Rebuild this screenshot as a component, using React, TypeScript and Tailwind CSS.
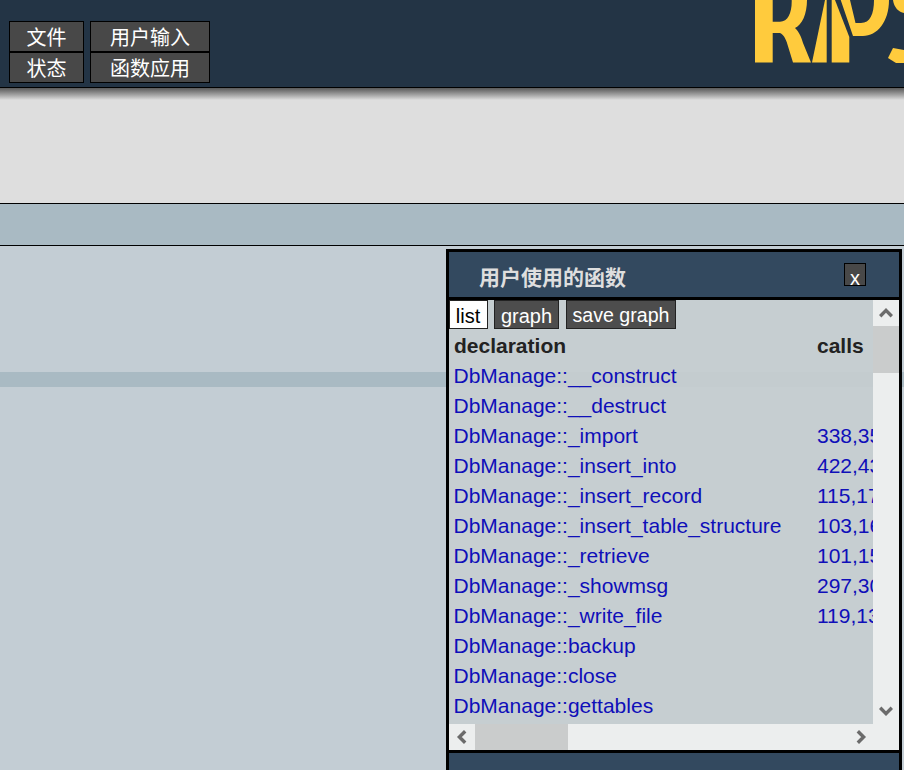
const functions: [string, string][] = [
  ["DbManage::__construct", ""],
  ["DbManage::__destruct", ""],
  ["DbManage::_import", "338,351"],
  ["DbManage::_insert_into", "422,433"],
  ["DbManage::_insert_record", "115,172"],
  ["DbManage::_insert_table_structure", "103,161"],
  ["DbManage::_retrieve", "101,151"],
  ["DbManage::_showmsg", "297,301"],
  ["DbManage::_write_file", "119,131"],
  ["DbManage::backup", ""],
  ["DbManage::close", ""],
  ["DbManage::gettables", ""],
];

const Chevron = ({ d }: { d: string }) => (
  <svg width="14" height="14" viewBox="0 0 14 14" fill="none" stroke="#6b6b6b" strokeWidth="3.4">
    <path d={d} />
  </svg>
);

const MenuButton = ({ label, className }: { label: string; className: string }) => (
  <div className={`flex h-[31px] items-center justify-center border border-black bg-[#484848] pt-[2px] text-[20px] leading-none text-white ${className}`}>
    {label}
  </div>
);

export default function App() {
  return (
    <div className="relative h-[770px] overflow-hidden bg-[#c3cdd4] font-['Liberation_Sans','Noto_Sans_CJK_SC',sans-serif]">
      {/* Header */}
      <div className="relative h-[88px] overflow-hidden border-b border-black bg-[#233445]">
        <div className="grid w-[211px] grid-cols-[75px_120px] gap-x-[6px] pl-[9px] pt-[21px]">
          <MenuButton label="文件" className="w-[75px]" />
          <MenuButton label="用户输入" className="w-[120px]" />
          <MenuButton label="状态" className="w-[75px]" />
          <MenuButton label="函数应用" className="w-[120px]" />
        </div>
        <svg className="absolute left-[755px] top-0" width="149" height="63" viewBox="0 0 149 63" fill="#ffcb3d">
          <path fillRule="evenodd" d="M0 0V62.5H17.7V33H25C29 35 30 38 31.7 42L38 62.5H56L48 43C46 36 44 32 40 28C47 25 52 14 52 0H36.7C37 13 33 21.7 25 21.7H17.7V0Z" />
          <path d="M57 62.5L70 0H71.7V62.5Z" />
          <path d="M76.7 0H80L94.3 37V62.5H76.7Z" />
          <path d="M85.7 0L98 36H108C122 36 134 22 134 0H119C119 14 115 23 106 23H100.5L95 0Z" />
          <path d="M138 0H149V13C144 12 139 8 138 0Z" />
          <path d="M133 58L138 48L149 50V63H141Z" />
        </svg>
      </div>
      <div className="h-[12px] bg-gradient-to-b from-[#5a5a5a] to-[#dedede]" />
      <div className="h-[103px] bg-[#dedede]" />
      <div className="h-[43px] border-y border-black bg-[#a9bac3]" />
      <div className="mt-[126px] h-[15px] bg-[#a9bac3]" />

      {/* Function list window */}
      <div className="absolute left-[446px] top-[249px] flex h-[530px] w-[456px] flex-col border-[3px] border-black">
        <div className="flex h-[45px] shrink-0 items-center justify-between bg-[#33495f] pl-[30px] pr-[33px]">
          <span className="pt-[6px] text-[21px] font-bold leading-none text-[#dedede]">用户使用的函数</span>
          <div className="mt-[-1px] flex h-[23px] w-[22px] items-end justify-center border border-black bg-[#484848] text-[20px] leading-[14px] text-white">
            x
          </div>
        </div>
        <div className="flex h-[427px] shrink-0 border-t-[3px] border-black bg-[#c6ced0]/90">
          <div className="w-[424px] overflow-hidden">
            <div className="flex h-[31px] w-[424px] text-[20px] leading-none">
              <div className="flex h-[29px] w-[39px] items-center justify-center border border-[#222] bg-white pr-[1px] pt-[2px] text-black">list</div>
              <div className="ml-[6px] flex h-[29px] w-[65px] items-center justify-center border border-[#222] bg-[#4d4d4d] pt-[2px] text-white">graph</div>
              <div className="ml-[7px] flex h-[29px] w-[110px] items-center justify-center border border-[#222] bg-[#4d4d4d] pt-[2px] text-[19.6px] text-white">save graph</div>
            </div>
            <div className="flex h-[30px] items-center whitespace-nowrap pl-[5px] text-[21px] font-bold text-[#222]">
              <span className="w-[363px] shrink-0">declaration</span>
              <span>calls</span>
            </div>
            {functions.map(([name, calls]) => (
              <div key={name} className="flex h-[30px] items-center whitespace-nowrap pl-[4.5px] text-[21px] text-[#0f0fb9]">
                <span className="w-[363.5px] shrink-0">{name}</span>
                <span>{calls}</span>
              </div>
            ))}
          </div>
          {/* vertical scrollbar */}
          <div className="flex w-[26px] flex-col bg-[#eceeee]">
            <div className="flex h-[26px] items-center justify-center">
              <Chevron d="M1.2 10.2L7 4.4L12.8 10.2" />
            </div>
            <div className="h-[47px] bg-[#cacccc]" />
            <div className="mt-auto flex h-[26px] items-center justify-center">
              <Chevron d="M1.2 3.8L7 9.6L12.8 3.8" />
            </div>
          </div>
        </div>
        {/* horizontal scrollbar */}
        <div className="flex h-[26px] shrink-0 items-center bg-[#eceeee]">
          <div className="flex h-[26px] w-[26px] items-center justify-center">
            <Chevron d="M10.2 1.2L4.4 7L10.2 12.8" />
          </div>
          <div className="h-[26px] w-[93px] bg-[#cacccc]" />
          <div className="ml-auto flex h-[26px] w-[52px] items-center justify-start pl-[7px]">
            <Chevron d="M3.8 1.2L9.6 7L3.8 12.8" />
          </div>
        </div>
        <div className="h-[30px] shrink-0 border-t-[3px] border-black bg-[#33495f]" />
      </div>
    </div>
  );
}
